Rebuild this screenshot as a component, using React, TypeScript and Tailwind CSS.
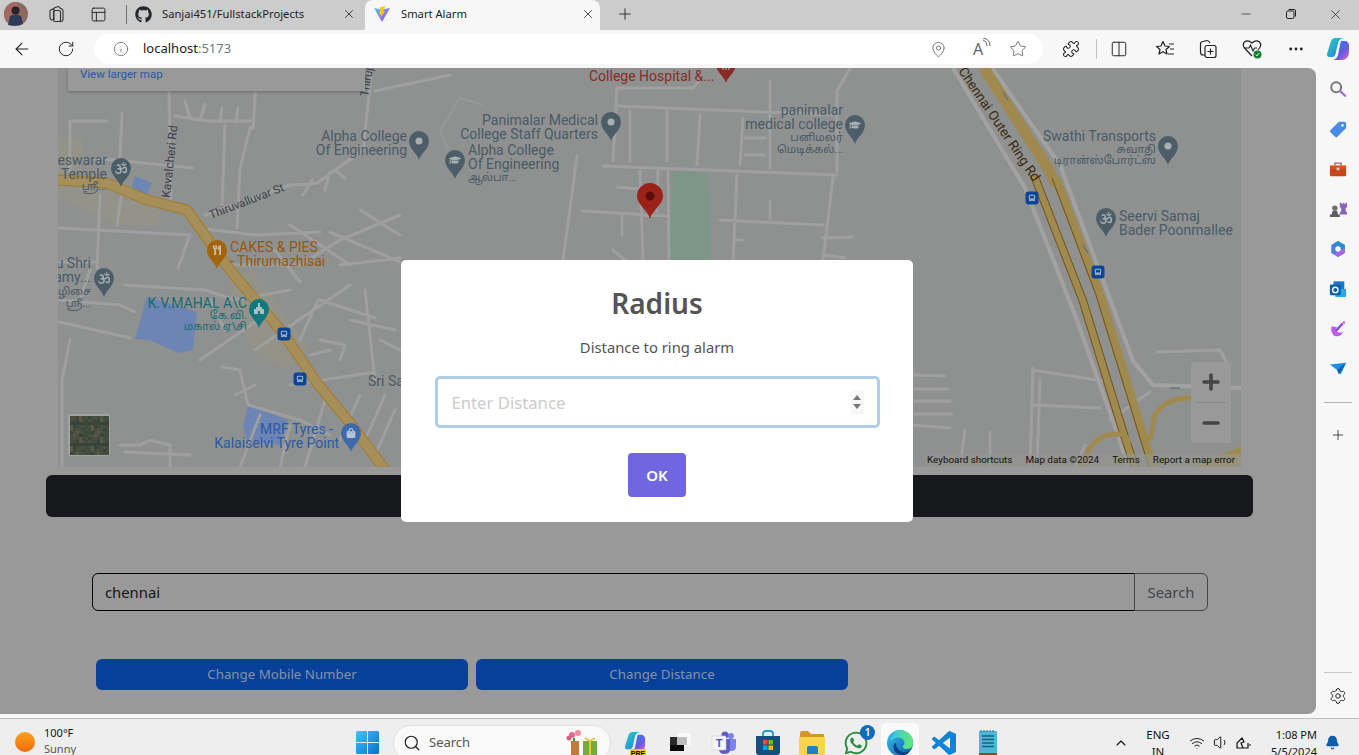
import React from "react";
import {
  ArrowLeft,
  ChevronUp,
  Info,
  MapPin,
  Minus,
  MoreHorizontal,
  Plus,
  RotateCw,
  Search,
  Settings,
  Star,
  Volume1,
  Wifi,
  X,
  Bell,
  PanelsTopLeft,
  Puzzle,
  Columns2,
} from "lucide-react";
import { FaBus, FaGithub, FaGraduationCap, FaOm, FaShoppingBag, FaUtensils, FaWhatsapp } from "react-icons/fa";

const ui = "font-['Noto_Sans','Open_Sans',sans-serif]";

// roads, in page coordinates (the svg viewBox starts at the map's corner)
const roads = [
  "M169 91L171 211",
  "M257 68L253 128L250 128L240 168L237 228",
  "M175 116L207 121L253 121",
  "M185 101L190 118M205 104L200 120M222 108L220 122M238 108L236 122",
  "M225 125L222 208",
  "M205 215L290 185L317 183L363 150L372 68",
  "M375 91L450 75",
  "M303 195L312 180M325 190L330 172M345 178L335 170",
  "M72 121L107 121M70 121L70 180",
  "M122 113L120 158",
  "M93 158L193 168",
  "M58 228L190 235M195 228L257 235L320 232",
  "M100 195L97 268M122 191L117 225M190 235L178 268",
  "M58 262L95 262M60 300L120 305L135 312",
  "M60 322L130 338M90 270L80 300M70 340L62 380L62 467",
  "M125 285L205 290L235 300L290 290",
  "M258 320L200 360M300 282L275 250M365 290L375 380M350 285L255 350",
  "M222 367L240 370L248 405L300 420L330 435",
  "M290 385L375 372M235 395L255 385M310 355L330 350M320 300L375 318M340 265L400 258",
  "M210 300L225 330M230 265L300 265L340 240L400 215",
  "M330 232L400 262M290 225L350 265M360 210L400 235",
  "M260 415L240 467M290 425L280 467M325 400L305 467M360 395L340 440",
  "M320 340L345 345L340 360M380 340L400 350M350 320L395 330M300 340L318 300M385 395L365 440M395 410L375 455",
  "M120 445L140 445L150 440L170 445L170 467M190 455L125 452",
  "M577 156L563 260",
  "M617 88L693 88L700 80M617 88L613 161",
  "M618 106L837 115M603 166L837 175",
  "M630 111L630 161M667 111L667 161M700 115L697 165M743 118L740 165M770 81L770 168",
  "M850 68L837 91L837 171",
  "M668 171L669 260M737 175L733 260M833 178L823 260",
  "M583 211L667 216M640 171L643 260M658 171L657 211M617 187L640 189",
  "M622 215L622 235M770 201L770 218M720 220L823 225",
  "M823 238L853 237M735 240L742 240M823 255L845 258M613 250L625 260",
  "M745 138L765 138M745 155L765 155",
  "M913 375L945 376M913 389L948 389M913 401L950 401M913 414L952 414M913 425L950 428",
  "M1033 368L1030 467M1033 370L1103 381M1033 405L1100 408M1040 380L1037 467M960 467L965 430M990 467L990 432",
  "M1157 352L1220 350L1228 365L1222 388",
  "M1110 420L1150 392",
  "M1085 445L1075 467",
];

const thickRoads = [
  "M992 68L1060 165L1133 361L1153 385L1241 388",
  "M953 68L1025 188L1075 315L1118 435L1128 467",
];

function Pin({ x, y, fill, children }: { x: number; y: number; fill: string; children?: React.ReactNode }) {
  return (
    <g transform={`translate(${x} ${y})`}>
      <path d="M0 19C-2 12-10 8-10 0A10 10 0 1 1 10 0C10 8 2 12 0 19Z" fill={fill} />
      {children}
    </g>
  );
}

function BusStop({ x, y }: { x: number; y: number }) {
  return (
    <g transform={`translate(${x - 6.5} ${y - 6.5})`}>
      <rect width="13" height="13" rx="3" fill="#0c4496" />
      <FaBus x={3} y={3} size={7} color="#a9b7cc" />
    </g>
  );
}

function Label({ x, y, lines, fill, anchor = "end", gap = 14, size = 14 }: { x: number; y: number; lines: string[]; fill: string; anchor?: "start" | "end"; gap?: number; size?: number }) {
  return (
    <text textAnchor={anchor} fill={fill} fontSize={size} fontFamily="Roboto, 'Noto Sans Tamil', sans-serif">
      {lines.map((line, i) => (
        <tspan key={i} x={x} y={y + i * gap}>
          {line}
        </tspan>
      ))}
    </text>
  );
}

function Satellite() {
  const cells = [];
  const colors = ["#46503f", "#4c4f42", "#3f4a3b", "#5a5847", "#3e4a3a", "#4a4c3e", "#38443a"];
  for (let i = 0; i < 13; i++) {
    for (let j = 0; j < 13; j++) {
      cells.push(<rect key={`${i}-${j}`} x={70 + i * 3} y={416 + j * 3} width="3" height="3" fill={colors[(i * i * 7 + j * j * 5 + i * j * 3 + i) % 7]} />);
    }
  }
  return (
    <g>
      <rect x="68" y="414" width="42" height="42" rx="2" fill="#a2a2a2" />
      {cells}
    </g>
  );
}

function MapDrawing() {
  return (
    <svg viewBox="58 68 1183 399" className="block w-full h-full">
      <rect x="58" y="68" width="1183" height="399" fill="#8f9191" />
      <path d="M58 138L82 138L82 178L58 176ZM58 185L107 187L160 208L160 225L117 225L58 197Z" fill="#93938a" />
      <path d="M227 283L250 268L270 293L310 350L283 370L250 347Z" fill="#93938a" />
      <path d="M135 176L152 183L145 198L130 193Z" fill="#6c85b4" />
      <path d="M147 297L197 312L193 350L178 353L150 340L135 339Z" fill="#6c85b4" />
      <path d="M248 405L288 420L280 445L247 440L243 427Z" fill="#6c85b4" />
      <path d="M673 171L708 173L711 260L669 260Z" fill="#7c9688" />

      <path d={roads.join("")} fill="none" stroke="#9f9f9f" strokeWidth="3" strokeLinecap="round" strokeLinejoin="round" />
      <path d="M440 130L460 98L483 105M448 150L440 130" fill="none" stroke="#969898" strokeWidth="2.500" />
      <path d={thickRoads.join("")} fill="none" stroke="#a2a2a2" strokeWidth="4" />

      {/* highway on the left */}
      <path d="M58 180L107 183L147 200L187 210L207 238L230 270L283 333L317 383L350 423L385 470" fill="none" stroke="#a17b2f" strokeWidth="11" strokeLinejoin="round" />
      <path d="M58 180L107 183L147 200L187 210L207 238L230 270L283 333L317 383L350 423L385 470" fill="none" stroke="#a68f59" strokeWidth="9" strokeLinejoin="round" />

      {/* Chennai Outer Ring Rd */}
      <path d="M984 68L1046 165L1056 185" fill="none" stroke="#a0894f" strokeWidth="11" />
      <path d="M1034 175L1083 301L1124 435L1135 467" fill="none" stroke="#a0894f" strokeWidth="8" />
      <path d="M1056 178L1100 295L1143 435L1153 467" fill="none" stroke="#a0894f" strokeWidth="9" />
      <path d="M1030 175L1079 301L1120 435L1131 467M1038 175L1087 301L1128 435L1139 467M1052 178L1096 295L1139 435L1149 467" fill="none" stroke="#6f5315" strokeWidth="1" />
      <path d="M1150 440L1155 415Q1165 398 1190 398L1215 398" fill="none" stroke="#a0894f" strokeWidth="5" />
      <path d="M1082 467Q1090 435 1115 434Q1130 434 1128 445" fill="none" stroke="#a0894f" strokeWidth="5" />
      <path d="M1195 467L1241 446L1241 467Z" fill="#a0894f" />
      <path d="M1003 92L1008 100M1083 245L1088 253M1170 388L1180 388" fill="none" stroke="#6f7676" strokeWidth="1.5" />

      <text transform="translate(958 71) rotate(56)" fontSize="13.500" fill="#3b2a0c" fontFamily="Roboto, sans-serif">Chennai Outer Ring Rd</text>
      <text transform="translate(170 198) rotate(-84)" fontSize="12" fill="#3a4248" fontFamily="Roboto, sans-serif">Kavalcheri Rd</text>
      <text transform="translate(211 219) rotate(-21)" fontSize="11.500" fill="#3a4248" fontFamily="Roboto, sans-serif">Thiruvalluvar St</text>
      <text transform="translate(368 97) rotate(-80)" fontSize="11.500" fill="#3a4248" fontFamily="Roboto, sans-serif">Thirup</text>

      <Label x={107} y={165} lines={["eswarar", "Temple"]} fill="#4a5a66" />
      <Label x={107} y={190} lines={["ஸ்ரீ..."]} fill="#4a5a66" size={11} />
      <Pin x={121} y={168} fill="#4c5d68"><FaOm x={-6} y={-6} size={12} color="#a7afb3" /></Pin>

      <Label x={407} y={141} lines={["Alpha College", "Of Engineering"]} fill="#4a5a66" />
      <Pin x={419} y={141} fill="#4c5d68"><circle r="3.5" fill="#a7afb3" /></Pin>

      <Label x={468} y={155} lines={["Alpha College", "Of Engineering"]} fill="#4a5a66" anchor="start" />
      <Label x={468} y={181} lines={["ஆல்பா..."]} fill="#4a5a66" anchor="start" size={11} />
      <Pin x={455} y={160} fill="#4c5d68"><FaGraduationCap x={-6} y={-6} size={12} color="#a7afb3" /></Pin>

      <Label x={598} y={125} lines={["Panimalar Medical", "College Staff Quarters"]} fill="#4a5a66" />
      <Pin x={611} y={122} fill="#4c5d68"><circle r="3.5" fill="#a7afb3" /></Pin>

      <Label x={843} y={115} lines={["panimalar", "medical college"]} fill="#4a5a66" />
      <Label x={843} y={141} lines={["பனிமலர்", "மெடிக்கல்..."]} fill="#4a5a66" size={11} gap={12} />
      <Pin x={855} y={125} fill="#4c5d68"><FaGraduationCap x={-6} y={-6} size={12} color="#a7afb3" /></Pin>

      <Label x={589} y={81} lines={["College Hospital &..."]} fill="#8a2a25" anchor="start" />
      <Pin x={726} y={64} fill="#8a2a25"><path d="M-3 0V6M0 0V6M3 0V6" stroke="#a7afb3" strokeWidth="1.2" /></Pin>

      <path d="M650 219C648 210 637 205 637 196A13 13 0 1 1 663 196C663 205 652 210 650 219Z" fill="#9b2219" />
      <circle cx="650" cy="196" r="4.5" fill="#5e0e0a" />

      <Label x={1156} y={141} lines={["Swathi Transports"]} fill="#4a5a66" />
      <Label x={1156} y={153} lines={["சுவாதி", "டிரான்ஸ்போர்ட்ஸ்"]} fill="#4a5a66" size={11} gap={11} />
      <Pin x={1168} y={146} fill="#4c5d68"><circle r="3.5" fill="#a7afb3" /></Pin>

      <Label x={1119} y={221} lines={["Seervi Samaj", "Bader Poonmallee"]} fill="#4a5a66" anchor="start" />
      <Pin x={1106} y={218} fill="#4c5d68"><FaOm x={-6} y={-6} size={12} color="#a7afb3" /></Pin>

      <Label x={230} y={252} lines={["CAKES & PIES", "- Thirumazhisai"]} fill="#96580a" anchor="start" />
      <Pin x={217} y={250} fill="#a2640c"><FaUtensils x={-5} y={-5} size={10} color="#c9b9a0" /></Pin>

      <Label x={91} y={268} lines={["u Shri", "amy..."]} fill="#4a5a66" />
      <Label x={91} y={295} lines={["ழிசை", "ஸ்ரீ..."]} fill="#4a5a66" size={11} gap={12} />
      <Pin x={104} y={278} fill="#4c5d68"><FaOm x={-6} y={-6} size={12} color="#a7afb3" /></Pin>

      <Label x={247} y={308} lines={["K.V.MAHAL A\\C"]} fill="#196a72" />
      <Label x={247} y={319} lines={["கே.வி.", "மகால் ஏ\\சி"]} fill="#196a72" size={11} gap={11} />
      <Pin x={259} y={309} fill="#13777f"><path d="M-5 5V0H-3V-2H-1V-6H1V-2H3V0H5V5H1V2H-1V5Z" fill="#a7c0c3" /></Pin>

      <Label x={368} y={386} lines={["Sri Sa"]} fill="#4a5a66" anchor="start" />
      <Label x={333} y={434} lines={["MRF Tyres -"]} fill="#2a5aa8" />
      <Label x={339} y={448} lines={["Kalaiselvi Tyre Point"]} fill="#2a5aa8" />
      <Pin x={351} y={433} fill="#3f69ad"><FaShoppingBag x={-5} y={-5} size={10} color="#b5c3d8" /></Pin>

      <BusStop x={284} y={334} />
      <BusStop x={300} y={379} />
      <BusStop x={1032} y={198} />
      <BusStop x={1098} y={272} />
      <Satellite />
    </svg>
  );
}

function RestoreIcon() {
  return (
    <svg width="12" height="12" viewBox="0 0 12 12" fill="none" stroke="#222" strokeWidth="1">
      <rect x="1.5" y="3" width="7.5" height="7.5" rx="1.5" />
      <path d="M3.5 1.5H9A1.5 1.5 0 0 1 10.5 3V8.5" />
    </svg>
  );
}

function Avatar() {
  return (
    <svg width="24" height="24" viewBox="0 0 24 24">
      <circle cx="12" cy="12" r="12" fill="#8d6a5e" />
      <path d="M0 12A12 12 0 0 1 14 0L8 24A12 12 0 0 1 0 12Z" fill="#a06a62" />
      <circle cx="11.5" cy="8.5" r="4" fill="#2d2027" />
      <path d="M4 23L6 14Q11 11 17 14L19 22Q12 25 4 23Z" fill="#2c3a5a" />
    </svg>
  );
}

function Workspaces() {
  return (
    <svg width="18" height="18" viewBox="0 0 18 18" fill="none" stroke="#333" strokeWidth="1.1">
      <path d="M7 3L11 1.500Q12.500 1.500 13 3L15 4Q16 4.500 16 6V14Q16 16.500 13.500 16.500H10" />
      <rect x="6.500" y="5.500" width="7" height="11" rx="1.500" />
      <path d="M3 5.500L7 3.500V14.500L4.500 15Q3 14 3 12.500Z" />
    </svg>
  );
}

function ViteLogo() {
  return (
    <svg width="16" height="16" viewBox="0 0 16 16">
      <defs>
        <linearGradient id="vt" x1="0" y1="0" x2="1" y2="1">
          <stop offset="0" stopColor="#41d1ff" />
          <stop offset="1" stopColor="#bd34fe" />
        </linearGradient>
      </defs>
      <path d="M0 2L8 3.500L16 2L8.300 15.500Q8 16 7.700 15.500Z" fill="url(#vt)" />
      <path d="M11.500 0L6 1.200L5.500 9L7.200 8.500L6.800 11.500L11 5L9 5.400Z" fill="#ffc517" />
    </svg>
  );
}

function Copilot({ size = 24 }: { size?: number }) {
  return (
    <svg width={size} height={size} viewBox="0 0 24 24">
      <defs>
        <linearGradient id="cpa" x1="0" y1="0" x2="1" y2="1">
          <stop offset="0" stopColor="#33d2c0" />
          <stop offset="1" stopColor="#1a78e0" />
        </linearGradient>
        <linearGradient id="cpb" x1="0" y1="0" x2="1" y2="1">
          <stop offset="0" stopColor="#1a8be8" />
          <stop offset="0.6" stopColor="#6a5ae0" />
          <stop offset="1" stopColor="#e06ac0" />
        </linearGradient>
      </defs>
      <path d="M9 1H17Q13 2 12 6L9.500 17Q8.500 20 6 20H3Q1 20 1 17L5 4Q6 1 9 1Z" fill="url(#cpa)" />
      <path d="M15 4H19Q22 4 23 8L23 16Q22 23 16 23H7Q11 22 12 18L14 8Q14.500 5 15 4Z" fill="url(#cpb)" />
    </svg>
  );
}

function Favorites() {
  return (
    <svg width="20" height="20" viewBox="0 0 20 20" fill="none" stroke="#222" strokeWidth="1.2" strokeLinejoin="round">
      <path d="M8 2.500L10 7L14.500 7.500L11 10.500L12 15L8 12.700L4 15L5 10.500L1.500 7.500L6 7Z" />
      <path d="M14 5H19M15 10H19M13 15H19" />
    </svg>
  );
}

function Collections() {
  return (
    <svg width="20" height="20" viewBox="0 0 20 20" fill="none" stroke="#222" strokeWidth="1.2">
      <path d="M7 16H5Q2.500 16 2.500 13V5Q2.500 2.500 5 2.500L9 1.500Q11 1.500 12 4" />
      <rect x="7" y="6.500" width="11" height="12" rx="2" />
      <path d="M12.500 9.500V15.500M9.500 12.500H15.500" />
    </svg>
  );
}

function HealthHeart() {
  return (
    <svg width="22" height="22" viewBox="0 0 22 22" fill="none">
      <path d="M11 18L3.500 10Q1 6.500 3.500 4Q7 1.500 11 5Q15 1.500 18.500 4Q21 6.500 18.500 10L17 12" stroke="#222" strokeWidth="1.2" />
      <path d="M3 10H8L9.500 7L12 13L13.500 10H16" stroke="#222" strokeWidth="1.1" />
      <circle cx="16.500" cy="16.500" r="4" fill="#157f2c" />
      <path d="M14.800 16.500L16 17.800L18.200 15.200" stroke="#fff" strokeWidth="1" />
    </svg>
  );
}

function ReadAloud() {
  return (
    <span className="relative flex w-5 h-5 items-center justify-center">
      <span className="font-['Noto_Sans',sans-serif] text-[16px] leading-none text-[#666]">A</span>
      <svg className="absolute -top-px -right-1" width="10" height="10" viewBox="0 0 10 10" fill="none" stroke="#666">
        <path d="M1 2Q5 3 5 8M1 0Q8 1 8 8" />
      </svg>
    </span>
  );
}

function SideIcon({ kind }: { kind: string }) {
  if (kind === "search")
    return (
      <svg width="18" height="18" viewBox="0 0 20 20" fill="none">
        <circle cx="8" cy="8" r="5.500" stroke="#77787a" strokeWidth="2.200" />
        <path d="M12.500 12.500L18 17.500" stroke="#a368d8" strokeWidth="2.600" strokeLinecap="round" />
      </svg>
    );
  if (kind === "tag")
    return (
      <svg width="18" height="18" viewBox="0 0 20 20">
        <path d="M11 2H17Q19 2 19 4V9L9 19Q8 20 7 19L1.500 13.500Q0.500 12.500 1.500 11.500Z" fill="#4a8be8" />
        <circle cx="15" cy="6" r="1.500" fill="#dbe8fb" />
      </svg>
    );
  if (kind === "tool")
    return (
      <svg width="18" height="18" viewBox="0 0 20 20">
        <path d="M6.500 6V3.500H13.500V6" fill="none" stroke="#7d7671" strokeWidth="1.500" />
        <path d="M1 6H19V10H1Z" fill="#e0501d" />
        <path d="M1 10H19V17Q19 18 18 18H2Q1 18 1 17Z" fill="#c9441a" />
        <rect x="8.500" y="8.500" width="3" height="3" fill="#d9d2cc" />
      </svg>
    );
  if (kind === "chess")
    return (
      <svg width="18" height="18" viewBox="0 0 20 20">
        <path d="M12 3H14V4.500H15.500V3H17V4.500H18.500V3H20V8L18.500 9V13H20V16H12V13H13.500V9L12 8Z" fill="#8b62bd" />
        <circle cx="6.500" cy="9" r="3" fill="#6f6f6f" />
        <path d="M4 12H9L10 16H12V19H1V16H3Z" fill="#5c5c5c" />
      </svg>
    );
  if (kind === "m365")
    return (
      <svg width="18" height="18" viewBox="0 0 20 20" fill="none">
        <path d="M10 1L17.500 5.500V14.500L10 19L2.500 14.500V5.500Z" fill="#4e7ee0" />
        <path d="M10 1L17.500 5.500V10H13A3 3 0 0 0 8 7.500L4 5Z" fill="#2b8ec9" />
        <path d="M17.500 10V14.500L10 19L6 15L12 12.500A3 3 0 0 0 13 10Z" fill="#a36ae0" />
        <circle cx="10" cy="10" r="3" fill="#f7f7f7" />
      </svg>
    );
  if (kind === "outlook")
    return (
      <svg width="18" height="18" viewBox="0 0 20 20">
        <rect x="5" y="1.500" width="12" height="9" fill="#1a77c9" />
        <path d="M7 10H19V18Q19 19 18 19H8Q7 19 7 18Z" fill="#28a8ea" />
        <rect x="1" y="5" width="12" height="12" rx="1.500" fill="#0d5ea8" />
        <circle cx="7" cy="11" r="3" fill="none" stroke="#fff" strokeWidth="1.500" />
      </svg>
    );
  if (kind === "brush")
    return (
      <svg width="18" height="18" viewBox="0 0 20 20" fill="none">
        <path d="M3 7Q1 15 7 18Q13 19 16 13Q12 15 9 13Q7 11 9 8Z" fill="#bb5de8" />
        <path d="M8 12L15 4" stroke="#7c4be0" strokeWidth="2.500" />
        <circle cx="16.500" cy="3" r="1.500" fill="#e060d0" />
      </svg>
    );
  return (
    <svg width="18" height="18" viewBox="0 0 20 20">
      <path d="M1 5L19 3L13 16L9 11Z" fill="#1c8fe0" />
      <path d="M9 11L19 3L11 16Z" fill="#0a5fb0" />
    </svg>
  );
}

function Windows() {
  return (
    <svg width="23" height="23" viewBox="0 0 23 23">
      <defs>
        <linearGradient id="win" x1="0" y1="0" x2="1" y2="1">
          <stop offset="0" stopColor="#3ec5f7" />
          <stop offset="1" stopColor="#0670c8" />
        </linearGradient>
      </defs>
      <path d="M0 1.500Q0 0 1.500 0H11V11H0ZM12 0H21.500Q23 0 23 1.500V11H12ZM0 12H11V23H1.500Q0 23 0 21.500ZM12 12H23V21.500Q23 23 21.500 23H12Z" fill="url(#win)" />
    </svg>
  );
}

function AppIcon({ kind }: { kind: string }) {
  if (kind === "copilot")
    return (
      <span className="relative block w-6 h-6">
        <Copilot size={22} />
        <span className="absolute -bottom-[3px] left-[6px] w-[16px] h-[9px] rounded-[2px] bg-[#f5c518] text-[7px] leading-[9px] text-center font-bold text-black font-['Liberation_Sans',sans-serif]">PRE</span>
      </span>
    );
  if (kind === "task")
    return (
      <svg width="24" height="24" viewBox="0 0 24 24">
        <rect x="9" y="2" width="14" height="13" rx="1" fill="#f8f8f8" />
        <rect x="2" y="6" width="14" height="8" fill="#2a2a2a" />
        <rect x="9" y="6" width="10" height="8" fill="#bdbdbd" />
        <rect x="2" y="14" width="14" height="6" fill="#0a0a0a" />
      </svg>
    );
  if (kind === "teams")
    return (
      <svg width="26" height="26" viewBox="0 0 26 26">
        <circle cx="20" cy="6" r="3" fill="#7b83eb" />
        <circle cx="14" cy="5" r="3.500" fill="#5b5fc7" />
        <path d="M16 9H24Q25 9 25 10V17Q25 21 20 21Q18 21 16 19Z" fill="#7b83eb" />
        <path d="M8 9H19V20Q19 24 13 24Q9 24 8 20Z" fill="#5b5fc7" />
        <rect x="1" y="6" width="14" height="14" rx="1" fill="#f4f4f8" stroke="#c9c9d9" strokeWidth="0.500" />
        <text x="8" y="17" textAnchor="middle" fontSize="11" fontWeight="700" fill="#4b53bc" fontFamily="Liberation Sans, sans-serif">T</text>
      </svg>
    );
  if (kind === "store")
    return (
      <svg width="24" height="26" viewBox="0 0 24 26">
        <path d="M7 7V4Q7 1 10 1H14Q17 1 17 4V7" fill="none" stroke="#1f9cd8" strokeWidth="1.800" />
        <path d="M0 6H24V22Q24 25 21 25H3Q0 25 0 22Z" fill="#14507f" />
        <rect x="7" y="10" width="4.500" height="4.500" fill="#f25022" />
        <rect x="12.500" y="10" width="4.500" height="4.500" fill="#7fba00" />
        <rect x="7" y="15.500" width="4.500" height="4.500" fill="#00a4ef" />
        <rect x="12.500" y="15.500" width="4.500" height="4.500" fill="#ffb900" />
      </svg>
    );
  if (kind === "folder")
    return (
      <svg width="26" height="24" viewBox="0 0 26 24">
        <path d="M1 2Q1 0 3 0H9L12 3H24Q25 3 25 4V8H1Z" fill="#d49a20" />
        <path d="M0 6H26V22Q26 24 24 24H2Q0 24 0 22Z" fill="#fbd44e" />
        <path d="M8 23V17Q8 15 10 15H17Q19 15 19 17V23Z" fill="#1f7fc9" />
      </svg>
    );
  if (kind === "edge")
    return (
      <svg width="26" height="26" viewBox="0 0 26 26">
        <defs>
          <linearGradient id="edge" x1="0" y1="0" x2="1" y2="1">
            <stop offset="0" stopColor="#35c1f1" />
            <stop offset="1" stopColor="#0c59a4" />
          </linearGradient>
          <linearGradient id="edgeb" x1="0" y1="0" x2="1" y2="0">
            <stop offset="0" stopColor="#35c1f1" />
            <stop offset="1" stopColor="#66eb6e" />
          </linearGradient>
        </defs>
        <circle cx="13" cy="13" r="13" fill="url(#edge)" />
        <path d="M13 0A13 13 0 0 1 26 13Q26 19 19 19Q15 19 16 16Q20 12 14 8Q7 6 3 12Q4 2 13 0Z" fill="url(#edgeb)" />
        <path d="M7 14Q5 23 14 25Q19 26 23 21Q15 24 11 19Q9 17 9 13Z" fill="#0a3f86" />
      </svg>
    );
  if (kind === "code")
    return (
      <svg width="24" height="24" viewBox="0 0 24 24">
        <path fill="#0f84d6" d="M23.150 2.587L18.210.21a1.494 1.494 0 0 0-1.705.29l-9.460 8.630-4.120-3.128a.999.999 0 0 0-1.276.057L.327 7.261A1 1 0 0 0 .326 8.740L3.899 12 .326 15.260a1 1 0 0 0 .001 1.479L1.650 17.940a.999.999 0 0 0 1.276.057l4.120-3.128 9.460 8.630a1.492 1.492 0 0 0 1.704.29l4.942-2.377A1.500 1.500 0 0 0 24 20.060V3.939a1.500 1.500 0 0 0-.850-1.352zm-5.146 14.861L10.826 12l7.178-5.448v10.896z" />
      </svg>
    );
  return (
    <svg width="20" height="28" viewBox="0 0 20 28">
      <rect x="1" y="2" width="18" height="22" rx="1" fill="#4fb6d8" />
      <path d="M3 1V3M6 1V3M9 1V3M12 1V3M15 1V3" stroke="#1f6f8f" strokeWidth="1" />
      <path d="M4 7H16M4 10.500H16M4 14H16M4 17.500H16" stroke="#17617f" strokeWidth="1.400" />
      <rect x="1" y="24" width="18" height="3" fill="#8a4b24" />
    </svg>
  );
}

function Flowers() {
  return (
    <svg width="34" height="26" viewBox="0 0 34 26">
      <circle cx="6" cy="5" r="3" fill="#e86a8a" />
      <circle cx="12" cy="3" r="3" fill="#f08aa0" />
      <circle cx="3" cy="8" r="2.500" fill="#e05a7a" />
      <path d="M5 11H13V25H5Z" fill="#c47a3a" />
      <path d="M8 8V11" stroke="#4a8a3a" strokeWidth="2" />
      <rect x="17" y="11" width="14" height="14" fill="#6fae3a" />
      <path d="M24 11V25" stroke="#e8c53a" strokeWidth="2" />
      <path d="M19 8L24 11L29 8" stroke="#e8c53a" strokeWidth="2" fill="none" />
    </svg>
  );
}

export default function App() {
  return (
    <div className={`w-[1359px] h-[755px] overflow-hidden flex flex-col bg-[#f7f7f7] ${ui}`}>
      {/* tab strip, contents sit 1px above the middle */}
      <div className="h-[30px] shrink-0 bg-[#cccccc] flex items-start text-[11.2px] text-[#222]">
        <div className="ml-[4px] h-[28px] flex items-center"><Avatar /></div>
        <div className="ml-[19px] h-[28px] flex items-center"><Workspaces /></div>
        <div className="ml-[25px] h-[28px] flex items-center"><PanelsTopLeft size={17} strokeWidth={1.3} color="#222" /></div>
        <div className="ml-[19px] mt-[5px] w-px h-[19px] bg-[#777]" />
        <div className="w-[238px] h-[28px] flex items-center pl-[8px] pr-[9px]">
          <FaGithub size={17} color="#24292f" />
          <span className="ml-[10px]">Sanjai451/FullstackProjects</span>
          <X size={14} strokeWidth={1.4} className="ml-auto" />
        </div>
        <div className="w-[235px] h-[30px] flex items-center pl-[9px] pr-[5px] pb-[2px] bg-[#f7f7f7] rounded-t-lg">
          <ViteLogo />
          <span className="ml-[11px]">Smart Alarm</span>
          <X size={14} strokeWidth={1.4} className="ml-auto" />
        </div>
        <div className="ml-[16px] h-[28px] flex items-center"><Plus size={18} strokeWidth={1.2} /></div>
        <div className="ml-auto pr-[1px] h-[28px] flex items-center">
          <span className="w-[45px] flex justify-center"><Minus size={14} strokeWidth={1.2} /></span>
          <span className="w-[45px] flex justify-center"><RestoreIcon /></span>
          <span className="w-[45px] flex justify-center"><X size={15} strokeWidth={1.2} /></span>
        </div>
      </div>

      {/* toolbar */}
      <div className="h-[38px] shrink-0 bg-[#f7f7f7] flex items-center text-[#222]">
        <ArrowLeft size={20} strokeWidth={1.3} className="ml-[12px]" />
        <RotateCw size={18} strokeWidth={1.3} className="ml-[25px]" />
        <div className="ml-[19px] w-[949px] h-[30px] rounded-full bg-white flex items-center pl-[19px] pr-[5px]">
          <Info size={16} strokeWidth={1.2} color="#666" />
          <span className="ml-[14px] text-[13px]">localhost<span className="text-[#6d7b7c]">:5173</span></span>
          <span className="ml-auto flex items-center">
            <span className="w-[40px] flex justify-center"><MapPin size={17} strokeWidth={1.2} color="#666" /></span>
            <span className="w-[40px] flex justify-center"><ReadAloud /></span>
            <span className="w-[40px] flex justify-center"><Star size={18} strokeWidth={1.2} color="#666" /></span>
          </span>
        </div>
        <Puzzle size={18} strokeWidth={1.4} className="ml-[19px]" />
        <div className="ml-[16px] w-px h-[20px] bg-[#c4c4c4]" />
        <Columns2 size={18} strokeWidth={1.3} className="ml-[13px]" />
        <span className="ml-[27px]"><Favorites /></span>
        <span className="ml-[23px]"><Collections /></span>
        <span className="ml-[23px]"><HealthHeart /></span>
        <MoreHorizontal size={18} strokeWidth={1.8} className="ml-[24px]" />
        <span className="ml-[21px]"><Copilot /></span>
      </div>

      {/* page and sidebar */}
      <div className="h-[650px] shrink-0 flex items-start">
        <main className="relative w-[1316px] h-[646px] shrink-0 bg-[#999999] rounded-r-lg overflow-hidden">
          <div className="relative ml-[58px] w-[1183px] h-[399px]">
            <MapDrawing />
            <div className="absolute left-[10px] top-0 w-[297px] h-[23px] bg-[#999999] shadow-[0_1px_3px_rgba(0,0,0,0.25)] pl-[12px] text-[11.5px] leading-[12px] text-[#2a5aa8] font-['Roboto',sans-serif]">
              View larger map
            </div>
            <div className="absolute left-[1133px] top-[294px] w-[40px] h-[81px] rounded-[2px] bg-[#999999] flex flex-col items-center">
              <div className="h-[40px] flex items-center"><Plus size={24} strokeWidth={3.5} color="#444" /></div>
              <div className="w-[30px] h-px bg-[#8a8a8a]" />
              <div className="h-[40px] flex items-center"><Minus size={24} strokeWidth={3.5} color="#444" /></div>
            </div>
            <div className="absolute right-0 bottom-0 h-[13px] pb-px pl-[2px] pr-[6px] bg-[#94948f]/70 flex items-center gap-[13px] text-[9.850px] text-[#111] font-['Roboto',sans-serif] whitespace-nowrap">
              <span>Keyboard shortcuts</span>
              <span>Map data ©2024</span>
              <span>Terms</span>
              <span>Report a map error</span>
            </div>
          </div>

          <div className="mt-2 ml-[46px] w-[1207px] h-[42px] rounded-md bg-[#17181c]" />

          <div className="mt-[56px] ml-[92px] w-[1116px] h-[38px] flex text-[14.800px]">
            <input readOnly value="chennai" className="flex-1 min-w-0 px-3 bg-transparent border border-black rounded-l-md text-[#14161a] outline-none" />
            <div className="w-[74px] -ml-px border border-[#41464b] rounded-r-md text-[#41464b] flex items-center justify-center">Search</div>
          </div>

          <div className="mt-12 ml-[96px] flex gap-2 text-[13.300px] text-[#8592a8]">
            <div className="w-[372px] h-[31px] pt-px rounded-md bg-[#07409a] flex items-center justify-center">Change Mobile Number</div>
            <div className="w-[372px] h-[31px] pt-px rounded-md bg-[#07409a] flex items-center justify-center">Change Distance</div>
          </div>

          {/* sweetalert style dialog */}
          <div className="absolute left-[401px] top-[192px] w-[512px] h-[262px] bg-white rounded-[5px] flex flex-col items-center text-[#545454]">
            <h2 className="mt-[24px] text-[28px] leading-[38px] font-semibold">Radius</h2>
            <p className="mt-[15px] text-[14.800px] leading-[20px]">Distance to ring alarm</p>
            <div className="relative mt-[19px] w-[445px] h-[52px] border-[3px] border-[#aecde8] rounded-[5px] bg-white">
              <input placeholder="Enter Distance" className="w-full h-full pl-[14px] pr-10 text-[16.700px] outline-none placeholder:text-[#cccccc] bg-transparent" />
              <div className="absolute right-[13px] top-[11px] w-[13px] h-[24px] bg-[#f7f7f7] flex flex-col items-center justify-center gap-[4px]">
                <span className="w-0 h-0 border-x-[4px] border-x-transparent border-b-[5px] border-b-[#777]" />
                <span className="w-0 h-0 border-x-[4px] border-x-transparent border-t-[5px] border-t-[#777]" />
              </div>
            </div>
            <button className="mt-[25px] w-[58px] h-[44px] rounded-[4px] bg-[#7066e0] text-white text-[15px] font-semibold">OK</button>
          </div>
        </main>

        <aside className="flex-1 h-[646px] flex flex-col items-center pt-px">
          {["search", "tag", "tool", "chess", "m365", "outlook", "brush", "send"].map((kind) => (
            <div key={kind} className="h-[40px] flex items-center justify-center">
              <SideIcon kind={kind} />
            </div>
          ))}
          <div className="mt-[13px] w-[28px] h-px bg-[#b5b5b5]" />
          <Plus size={16} strokeWidth={1.2} color="#222" className="mt-[24px]" />
          <div className="mt-auto mb-[9px] flex flex-col items-center">
            <div className="w-[28px] h-px bg-[#c9c9c9] mb-[14px]" />
            <Settings size={18} strokeWidth={1.3} color="#222" />
          </div>
        </aside>
      </div>

      {/* windows taskbar, cut off by the screenshot */}
      <div className="h-[48px] shrink-0 border-t border-[#c0c0c0] bg-[#eeeeee] flex items-center text-[11px] text-[#111]">
        <span className="ml-[15px] w-[20px] h-[20px] -mt-[2px] rounded-full bg-gradient-to-b from-[#f9a11b] to-[#f26a0f]" />
        <div className="ml-[9px] w-[301px] -mt-[3px] leading-[16px]">
          <div>100°F</div>
          <div className="text-[#555]">Sunny</div>
        </div>
        <div className="w-[44px] flex justify-center"><Windows /></div>
        <div className="ml-[4px] w-[218px] h-[36px] rounded-full bg-[#f9f9f9] border border-[#e0e0e0] flex items-center pl-[9px] pr-[10px] text-[13px] text-[#555]">
          <Search size={18} strokeWidth={1.6} color="#222" />
          <span className="ml-[8px]">Search</span>
          <span className="ml-auto"><Flowers /></span>
        </div>
        <div className="ml-[3px] w-[44px] flex justify-center"><AppIcon kind="copilot" /></div>
        <div className="w-[44px] flex justify-center"><AppIcon kind="task" /></div>
        <div className="w-[44px] flex justify-center"><AppIcon kind="teams" /></div>
        <div className="w-[44px] flex justify-center"><AppIcon kind="store" /></div>
        <div className="w-[44px] flex justify-center"><AppIcon kind="folder" /></div>
        <div className="relative w-[44px] flex justify-center">
          <FaWhatsapp size={26} color="#2a8c3f" />
          <span className="absolute -top-[5px] right-[3px] w-[15px] h-[15px] rounded-full bg-[#0f6cbd] text-white text-[10px] leading-[15px] text-center font-semibold">1</span>
        </div>
        <div className="w-[38px] mx-[3px] h-[40px] rounded bg-[#f9f9f9] flex items-center justify-center"><AppIcon kind="edge" /></div>
        <div className="w-[44px] flex justify-center"><AppIcon kind="code" /></div>
        <div className="w-[44px] flex justify-center"><AppIcon kind="notes" /></div>
        <ChevronUp size={16} strokeWidth={1.6} className="ml-[103px]" />
        <div className="ml-[15px] w-[28px] text-center leading-[17px] text-[11.500px]">
          <div>ENG</div>
          <div>IN</div>
        </div>
        <Wifi size={16} strokeWidth={1.4} className="ml-[17px]" />
        <Volume1 size={17} strokeWidth={1.4} className="ml-[8px]" />
        <svg width="18" height="16" viewBox="0 0 18 16" fill="none" stroke="#111" strokeWidth="1.200" className="ml-[5px]">
          <path d="M2 13H13V8M14 10H16M2 13L2 8L7 3L9 7L6 8L8 13Z" />
        </svg>
        <div className="ml-[14px] w-[50px] text-right leading-[17px] whitespace-nowrap text-[11px]">
          <div>1:08 PM</div>
          <div>5/5/2024</div>
        </div>
        <Bell size={15} fill="#0f5cad" color="#0f5cad" className="ml-[8px]" />
      </div>
    </div>
  );
}
